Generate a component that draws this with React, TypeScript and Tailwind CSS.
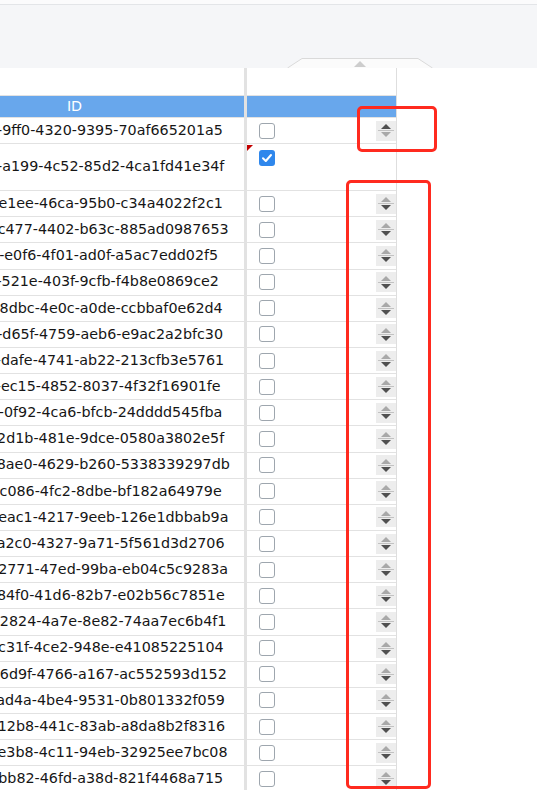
import React from "react";

const rows = [
  "5c1e8a3b-9ff0-4320-9395-70af665201a5",
  "0d7b24e6-a199-4c52-85d2-4ca1fd41e34f",
  "8f3a6c92-e1ee-46ca-95b0-c34a4022f2c1",
  "b4e1d0a7-c477-4402-b63c-885ad0987653",
  "7a29f3d1-e0f6-4f01-ad0f-a5ac7edd02f5",
  "3c8e1b5f-521e-403f-9cfb-f4b8e0869ce2",
  "e62f0a94-8dbc-4e0c-a0de-ccbbaf0e62d4",
  "1b7d9c3e-d65f-4759-aeb6-e9ac2a2bfc30",
  "94a5e7c2-dafe-4741-ab22-213cfb3e5761",
  "d0c3b8f6-ec15-4852-8037-4f32f16901fe",
  "6e4a2d71-0f92-4ca6-bfcb-24dddd545fba",
  "a8f51c09-2d1b-481e-9dce-0580a3802e5f",
  "2d96e4b3-8ae0-4629-b260-5338339297db",
  "f17c6a28-c086-4fc2-8dbe-bf182a64979e",
  "5b3e9d04-eac1-4217-9eeb-126e1dbbab9a",
  "c4082f7e-a2c0-4327-9a71-5f561d3d2706",
  "8e61b3a5-2771-47ed-99ba-eb04c5c9283a",
  "39d7f0c6-84f0-41d6-82b7-e02b56c7851e",
  "b5a2e81d-2824-4a7e-8e82-74aa7ec6b4f1",
  "07f4c9b2-c31f-4ce2-948e-e41085225104",
  "e9b06d35-6d9f-4766-a167-ac552593d152",
  "4ac8f2e7-ad4a-4be4-9531-0b801332f059",
  "d3f712b8-12b8-441c-83ab-a8da8b2f8316",
  "71c5a0e3-e3b8-4c11-94eb-32925ee7bc08",
  "a60e4d9f-bb82-46fd-a38d-821f4468a715",
];

const Tri = ({ up, dark }: { up: boolean; dark: boolean }) => (
  <svg width="10" height="5" viewBox="0 0 10 5">
    <path d={up ? "M0 5 L5 0 L10 5 Z" : "M0 0 L10 0 L5 5 Z"} fill={dark ? "#505050" : "#a9a9a9"} />
  </svg>
);

const Spinner = ({ first }: { first: boolean }) => (
  <div className="ml-auto w-[20px] h-[20px] bg-[#ededed] flex flex-col items-center justify-center gap-[1px]">
    <Tri up dark={first} />
    <div className="w-[16px] h-px bg-[#c2c2c2]" />
    <Tri up={false} dark={!first} />
  </div>
);

const Check = ({ on }: { on: boolean }) =>
  on ? (
    <div className="w-[16px] h-[16px] rounded-[3px] bg-[#2f87ec] flex items-center justify-center">
      <svg width="12" height="12" viewBox="0 0 12 12">
        <path d="M2 6.3 L4.8 9 L10 3" stroke="#fff" strokeWidth="2" fill="none" strokeLinecap="round" strokeLinejoin="round" />
      </svg>
    </div>
  ) : (
    <div className="w-[16px] h-[16px] rounded-[3px] border-[1.5px] border-[#9ea6ae] bg-white" />
  );

export default function App() {
  return (
    <div className="relative w-[537px] h-[790px] overflow-hidden bg-white font-['DejaVu_Sans',sans-serif] text-[14.3px] text-[#161616]">
      <div className="h-[68px] bg-[#f5f6f8] flex flex-col">
        <div className="h-[5px] bg-[#fbfbfc] border-b border-[#e3e5e8]" />
        <div className="flex-1 flex items-end">
          <svg width="146" height="10" viewBox="0 0 146 10" className="ml-[287px]">
            <path d="M0.5 10 L15 0.5 L131 0.5 L145.5 10" fill="#fbfbfb" stroke="#dadada" />
            <path d="M67 9 L73 3 L79 9 Z" fill="#cdcdcd" />
          </svg>
        </div>
      </div>

      <div className="w-[397px] overflow-hidden border-r border-[#dedede]">
        <div className="ml-[-95px] w-[491px]">
          <div className="flex h-[28px] border-b border-[#e2e2e2]">
            <div className="w-[342px] border-r-[3px] border-[#e2e2e2]" />
            <div className="w-[149px]" />
          </div>
          <div className="flex h-[22px] bg-[#68a7ec] text-white border-b border-[#e2e2e2]">
            <div className="w-[342px] border-r-[3px] border-[#e2e2e2] flex items-center justify-center">ID</div>
            <div className="w-[149px]" />
          </div>
          {rows.map((id, i) => (
            <div
              key={id}
              className={`flex border-b border-[#e2e2e2] ${i === 1 ? "h-[47px]" : "h-[26.15px]"}`}
            >
              <div className="w-[342px] shrink-0 border-r-[3px] border-[#e2e2e2] flex items-center justify-center whitespace-nowrap">
                {id}
              </div>
              <div
                className={`relative w-[149px] flex pl-[12px] ${i === 1 ? "items-start pt-[6px]" : "items-center"}`}
              >
                {i === 1 && (
                  <svg width="6" height="6" viewBox="0 0 6 6" className="absolute left-0 top-[1px]">
                    <path d="M0 0 L6 0 L0 6 Z" fill="#c40000" />
                  </svg>
                )}
                <Check on={i === 1} />
                {i !== 1 && <Spinner first={i === 0} />}
              </div>
            </div>
          ))}
        </div>
      </div>

      <div className="absolute left-[357px] top-[106px] w-[80px] h-[46px] border-[3px] border-[#ff2a1f] rounded-[5px]" />
      <div className="absolute left-[346px] top-[180px] w-[85px] h-[609px] border-[3px] border-[#ff2a1f] rounded-[5px]" />
    </div>
  );
}
